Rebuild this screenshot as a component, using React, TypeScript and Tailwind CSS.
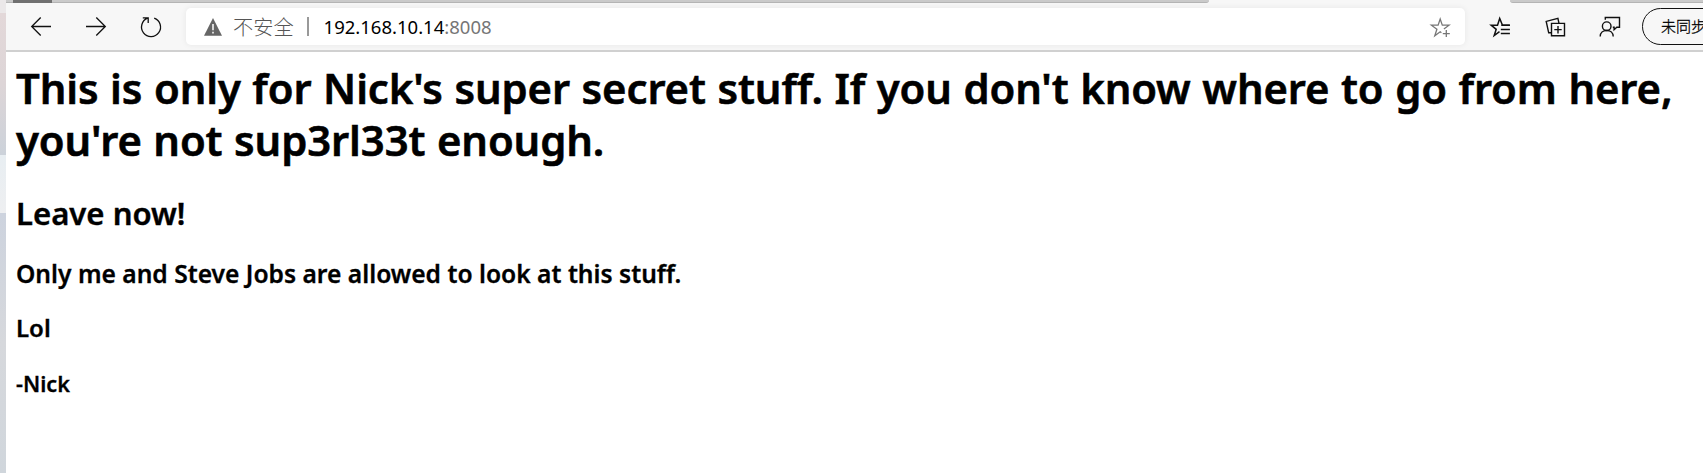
import type { ReactNode } from "react";

function Icon({ children, className = "", width = 1.3 }: { children: ReactNode; className?: string; width?: number }) {
  return (
    <svg
      viewBox="0 0 24 24"
      className={`h-6 w-6 shrink-0 ${className}`}
      fill="none"
      stroke="currentColor"
      strokeWidth={width}
    >
      {children}
    </svg>
  );
}

function DesktopEdge() {
  return (
    <div className="flex w-1.5 shrink-0 flex-col">
      <div className="h-[13px] bg-[#ebe8e9]" />
      <div className="h-[142px] bg-linear-to-b from-[#e3d8d9] via-[#ddd5d7] to-[#ccd2da]" />
      <div className="h-[58px] bg-linear-to-b from-[#e8eef2] to-[#eeeff1]" />
      <div className="grow bg-linear-to-b from-[#cdd3de] via-[#d6d8dc] to-[#d0d6dc]" />
    </div>
  );
}

function TabStrip() {
  return (
    <div className="flex h-[3px] shrink-0 bg-[#f7f7f7]">
      <div className="h-full w-[1203px] rounded-br-[3px] border-b border-[#b4b4b4] bg-[#cacaca] pl-[7px]">
        <div className="h-[3px] w-[39px] bg-[#707070]" />
      </div>
      <div className="w-[301px]" />
      <div className="h-full grow rounded-bl-[3px] border-b border-[#b4b4b4] bg-[#cacaca]" />
    </div>
  );
}

function AddressBar() {
  return (
    <div className="ml-[23px] flex h-[37px] w-[1279px] shrink-0 items-center rounded-[5px] bg-white pr-[13px] pl-[15px] shadow-[0_0_6px_rgba(0,0,0,0.07)]">
      <Icon className="text-[#666]">
        <path d="M12 3 21 20.8H3Z" fill="currentColor" stroke="none" />
        <path d="M12 9v6.2M12 16.8v1.7" stroke="#fff" strokeWidth="1.5" />
      </Icon>
      <span className="ml-2 font-['Noto_Sans_CJK_SC',sans-serif] text-[20.2px] leading-[36px] font-light text-[#555]">
        不安全
      </span>
      <span className="ml-[13px] h-[19px] w-0.5 bg-[#999]" />
      <span className="ml-[15px] text-[18.5px] leading-[36px] text-black">
        192.168.10.14<span className="text-[#767676]">:8008</span>
      </span>
      <Icon className="ml-auto text-[#777]">
        <path d="M15.9 14 21 10.2h-6.7L12.2 4 10.1 10.2H3.4L8.9 14.3 6.8 20.8 12.2 16.8 13.4 17.7" />
        <path d="M18.3 15.1v7M14.8 18.6h7" />
      </Icon>
    </div>
  );
}

function Toolbar() {
  return (
    <header className="flex h-[49px] shrink-0 items-start overflow-hidden border-b-2 border-[#d0d0d0] bg-[#f7f7f7] pt-[5px] pl-[23px] text-[#111]">
      <div className="flex h-[37px] items-center gap-[31px]">
        <Icon>
          <path d="M22 11.5H2.5M11.7 2.5 2.7 11.5l9 9" />
        </Icon>
        <Icon>
          <path d="M2 11.5h19.5M12.3 2.5l9 9-9 9" />
        </Icon>
        <Icon>
          <path d="M15.2 3.1a9.5 9.5 0 1 1-6.6.1M3.8 2.9h5.4v5" />
        </Icon>
      </div>
      <AddressBar />
      <div className="ml-[23px] flex h-[37px] items-center gap-[31px]">
        <Icon width={1.5}>
          <path d="M21.8 10.2h-7.3L11.7 3.5 9.5 10.2H3.2L8.2 14.3 6.2 20.6 11.5 16.6" />
          <path d="M13.3 10.2h8.6M12.8 14.4h9.1M12.8 18.6h9.1" />
        </Icon>
        <Icon width={1.4}>
          <path d="M8.5 8.4h13v12.4h-13ZM15 11v7.4M11.3 14.6h7.4M8.5 17.8H5.7L3.2 6.4 14.9 3.4l1.1 5" />
        </Icon>
        <Icon width={1.4}>
          <circle cx="8.7" cy="11.2" r="4.3" />
          <path d="M2.2 21.5c0-3.8 2.9-6 6.5-6s6.5 2.2 6.5 6M7.3 4.8V2.5h14.2v9.7h-2.7l-2.7 2.5v-2.5h-1.3" />
        </Icon>
      </div>
      <div className="ml-5 flex h-[37px] w-[120px] shrink-0 items-center rounded-full border-[1.3px] border-[#111] pl-[18px] font-['Noto_Sans_CJK_SC',sans-serif] text-[15px] font-light whitespace-nowrap text-black [-webkit-text-stroke:0.3px]">
        未同步
      </div>
    </header>
  );
}

export default function App() {
  return (
    <div className="flex h-[473px] w-[1703px] overflow-hidden bg-white font-['Noto_Sans',sans-serif] text-black">
      <DesktopEdge />
      <div className="flex min-w-0 grow flex-col">
        <TabStrip />
        <Toolbar />
        <main className="pt-[10px] pl-2.5 font-semibold whitespace-nowrap [-webkit-text-stroke:0.3px]">
          <h1 className="text-[41.8px] leading-[52px] tracking-[-0.09px] [word-spacing:0.8px] [-webkit-text-stroke:0.6px]">
            This is only for Nick's super secret stuff. If you don't know where to go from here,
            <br />
            you're not sup3rl33t enough.
          </h1>
          <h2 className="mt-[27px] text-[31.1px] leading-[40px] [-webkit-text-stroke:0.4px]">Leave now!</h2>
          <h3 className="mt-[25px] text-[24.6px] leading-[32px]">
            Only me and Steve Jobs are allowed to look at this stuff.
          </h3>
          <h3 className="mt-[22px] text-[24px] leading-[32px]">Lol</h3>
          <h4 className="mt-[26px] text-[21.7px] leading-[28px]">-Nick</h4>
        </main>
      </div>
    </div>
  );
}
